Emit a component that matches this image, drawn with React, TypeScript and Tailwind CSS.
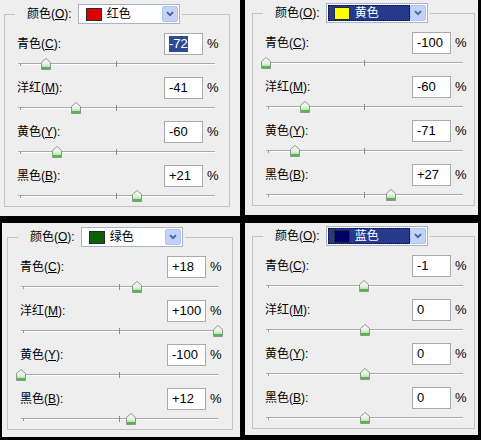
import React from "react";

type Row = { name: string; key: string; value: number; selected?: boolean };

type PanelData = {
  box: string;
  field: string;
  swatch: string;
  color: string;
  focused: boolean;
  rows: Row[];
};

const fmt = (v: number) => (v > 0 ? `+${v}` : `${v}`);

// 滑块的小房子形状
function Thumb() {
  return (
    <svg width="10" height="12" viewBox="0 0 10 12">
      <defs>
        <linearGradient id="thumbFill" x1="0" y1="0" x2="0" y2="1">
          <stop offset="0" stopColor="#fdfdfd" />
          <stop offset="0.55" stopColor="#e3efdc" />
          <stop offset="1" stopColor="#8fd08a" />
        </linearGradient>
      </defs>
      <path
        d="M0.5 11.5 V4.5 L5 0.5 L9.5 4.5 V11.5 Z"
        fill="url(#thumbFill)"
        stroke="#8a9a88"
      />
      <rect x="1" y="9" width="8" height="2" fill="#52b84c" />
    </svg>
  );
}

function Slider({ value }: { value: number }) {
  const left = ((value + 100) / 200) * 197 - 5;
  return (
    <div className="relative h-[16px] w-[197px] ml-[1px]">
      <div className="absolute left-0 right-0 top-[8px] h-[1px] bg-[#a8a8a8] shadow-[0_1px_0_#ffffff]" />
      <div className="absolute left-[2px] top-[8px] h-[3px] w-[1px] bg-[#9a9a9a]" />
      <div className="absolute left-[98px] top-[6px] h-[6px] w-[1px] bg-[#8c8c8c]" />
      <div className="absolute top-[3px]" style={{ left }}>
        <Thumb />
      </div>
    </div>
  );
}

function Dropdown({ swatch, color, focused }: { swatch: string; color: string; focused: boolean }) {
  return (
    <div className="w-[102px] h-[20px] border border-[#a9b4c2] bg-white flex p-[1px]">
      <div
        className={
          focused
            ? "flex-1 flex items-center bg-[#26398b] text-white border border-dotted border-[#0c0c2a]"
            : "flex-1 flex items-center border border-transparent"
        }
      >
        <span className={`ml-[5px] w-[16px] h-[13px] border border-[#2a2a2a] ${swatch}`} />
        <span className="ml-[5px] leading-none">{color}</span>
      </div>
      <div className="w-[16px] flex items-center justify-center bg-[#c2d3fa] border border-[#b2c4ee] rounded-[2px]">
        <svg width="8" height="6" viewBox="0 0 8 6">
          <path d="M1 1.2 L4 4.2 L7 1.2" fill="none" stroke="#4b5f8a" strokeWidth="1.8" />
        </svg>
      </div>
    </div>
  );
}

function Panel({ data }: { data: PanelData }) {
  return (
    <div className={`bg-[#eeeeee] ${data.box}`}>
      <fieldset className={`border border-[#c2c2c2] pl-[12px] pt-[9px] pb-[3px] ${data.field}`}>
        <legend className="ml-[-2px] pl-[12px] pr-[2px]">
          <div className="flex items-center gap-[6px] text-[12px]">
            <span>
              颜色(<span className="underline">O</span>):
            </span>
            <Dropdown swatch={data.swatch} color={data.color} focused={data.focused} />
          </div>
        </legend>
        <div className="flex flex-col gap-[6px]">
          {data.rows.map((r) => (
            <div key={r.key} className="flex flex-col">
              <div className="flex items-center h-[22px]">
                <span className="w-[147px] text-[12px]">
                  {r.name}(<span className="underline">{r.key}</span>):
                </span>
                <div className="w-[39px] h-[22px] border border-[#aaaaaa] bg-white flex items-center pl-[4px] text-[13px]">
                  {r.selected ? (
                    <span className="bg-[#2d4a96] text-white leading-[16px]">{fmt(r.value)}</span>
                  ) : (
                    fmt(r.value)
                  )}
                </div>
                <span className="ml-[4px] text-[13px]">%</span>
              </div>
              <Slider value={r.value} />
            </div>
          ))}
        </div>
      </fieldset>
    </div>
  );
}

const rowsOf = (c: number, m: number, y: number, k: number, sel = false): Row[] => [
  { name: "青色", key: "C", value: c, selected: sel },
  { name: "洋红", key: "M", value: m },
  { name: "黄色", key: "Y", value: y },
  { name: "黑色", key: "B", value: k },
];

const panels: PanelData[] = [
  {
    box: "w-[240px] h-[216px] pt-[4px] pl-[4px]",
    field: "w-[226px]",
    swatch: "bg-[#dd0000]",
    color: "红色",
    focused: false,
    rows: rowsOf(-72, -41, -60, 21, true),
  },
  {
    box: "w-[233px] h-[215px] pt-[3px] pl-[7px]",
    field: "w-[223px]",
    swatch: "bg-[#ffff00]",
    color: "黄色",
    focused: true,
    rows: rowsOf(-100, -60, -71, 27),
  },
  {
    box: "w-[240px] h-[214px] pt-[4px] pl-[5px] border-l-[2px] border-black",
    field: "w-[226px]",
    swatch: "bg-[#0b620b]",
    color: "绿色",
    focused: false,
    rows: rowsOf(18, 100, -100, 12),
  },
  {
    box: "w-[233px] h-[212px] pt-[3px] pl-[7px]",
    field: "w-[223px]",
    swatch: "bg-[#00006a]",
    color: "蓝色",
    focused: true,
    rows: rowsOf(-1, 0, 0, 0),
  },
];

export default function App() {
  return (
    <div className="w-[481px] h-[440px] bg-black flex flex-col gap-[7px] text-black font-['Liberation_Sans','Noto_Sans_CJK_SC',sans-serif]">
      <div className="flex items-start gap-[5px]">
        <Panel data={panels[0]} />
        <Panel data={panels[1]} />
      </div>
      <div className="flex items-start gap-[5px]">
        <Panel data={panels[2]} />
        <Panel data={panels[3]} />
      </div>
    </div>
  );
}
